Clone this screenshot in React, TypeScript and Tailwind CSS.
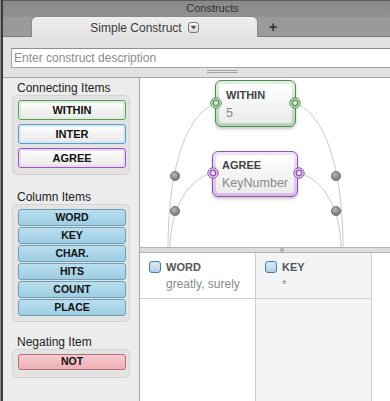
import React from "react";

const connecting = [
  { label: "WITHIN", border: "border-[#5b9a5b]", tint: "shadow-[inset_0_0_0_2px_#dbeedb]" },
  { label: "INTER", border: "border-[#5b9bc9]", tint: "shadow-[inset_0_0_0_2px_#d5e8f5]" },
  { label: "AGREE", border: "border-[#9a55c0]", tint: "shadow-[inset_0_0_0_2px_#ead9f3]" },
];

const columns = ["WORD", "KEY", "CHAR.", "HITS", "COUNT", "PLACE"];

function Port({ x, y, fill, stroke }: { x: number; y: number; fill: string; stroke: string }) {
  return (
    <g>
      <circle cx={x} cy={y} r={5.2} fill={fill} stroke={stroke} strokeWidth={1} />
      <circle cx={x} cy={y} r={2.8} fill="none" stroke={stroke} strokeWidth={1.3} />
    </g>
  );
}

function Dot({ x, y }: { x: number; y: number }) {
  return <circle cx={x} cy={y} r={4.6} fill="url(#dotg)" stroke="#6a6a6a" strokeWidth={0.8} />;
}

function Checkbox() {
  return (
    <div className="w-[12px] h-[12px] rounded-[3px] border border-[#3b7fae] bg-gradient-to-b from-[#dbeaf3] to-[#b3d1e3] shrink-0" />
  );
}

export default function App() {
  const m = (x: number) => 511 - x;
  return (
    <div className="w-[390px] h-[401px] flex overflow-hidden bg-[#e2e2e2] font-['Liberation_Sans',Arial,sans-serif]">
      <div className="w-[3px] shrink-0 flex">
        <div className="w-px bg-[#8c8c8c]" />
        <div className="w-[2px] bg-[#3c3c3c]" />
      </div>
      <div className="flex-1 min-w-0 flex flex-col">
        {/* title bar */}
        <div className="h-[17px] shrink-0 bg-gradient-to-b from-[#8a8a8a] to-[#929292] border-t border-[#5c5c5c] flex justify-center pl-[32px]">
          <span className="text-[11px] leading-[15px] text-[#333]">Constructs</span>
        </div>
        {/* tab strip */}
        <div className="h-[20px] shrink-0 bg-[#9a9a9a] flex items-end shadow-[inset_0_-1px_0_#7c7c7c]">
          <div className="ml-[29px] w-[225px] h-[20px] rounded-t-[5px] bg-gradient-to-b from-[#eeeeee] to-[#e3e3e3] shadow-[0_0_0_1px_#8a8a8a] flex items-center justify-center gap-[6px]">
            <span className="text-[12px] leading-[14px] text-[#3a3a3a] pt-[1px]">Simple Construct</span>
            <div className="w-[11px] h-[11px] rounded-[3px] border border-[#7a7a7a] bg-gradient-to-b from-[#fafafa] to-[#d8d8d8] flex items-center justify-center">
              <svg width="7" height="5" viewBox="0 0 7 5">
                <path d="M0.5 0.8 L6.5 0.8 L3.5 4.4 Z" fill="#555" />
              </svg>
            </div>
          </div>
          <div className="w-[32px] h-[20px] flex items-center justify-center">
            <span className="text-[14px] leading-[14px] font-bold text-[#333]">+</span>
          </div>
        </div>
        {/* description */}
        <div className="h-[40px] shrink-0 pt-[11px] pl-[8px] bg-[#e2e2e2]">
          <div className="h-[20px] bg-white border border-r-0 border-[#a4a4a4] border-t-[#8e8e8e] pl-[2px] text-[12px] leading-[18px] text-[#8c8c8c]">
            Enter construct description
          </div>
          <div className="ml-[196px] mt-[2px] w-[31px] flex flex-col gap-px">
            <div className="h-px bg-[#a6a6a6]" />
            <div className="h-px bg-[#a6a6a6]" />
          </div>
        </div>
        {/* main */}
        <div className="flex-1 min-h-0 flex border-t border-[#a8a8a8]">
          {/* left panel */}
          <div className="w-[137px] shrink-0 bg-[#ececec] border-r border-[#a6a6a6] pt-[3px] pl-[9px]">
            <div className="pl-[5px] h-[14px] text-[12px] leading-[14px] text-[#222]">Connecting Items</div>
            <div className="w-[118px] rounded-[5px] border border-[#d3d3d3] bg-[#e3e3e3] pt-[4px] pb-[6px] pl-[5px] pr-[3px] flex flex-col gap-[4px]">
              {connecting.map((c) => (
                <div
                  key={c.label}
                  className={`h-[20px] rounded-[3px] border ${c.border} ${c.tint} bg-gradient-to-b from-white to-[#e8e8e8] flex items-center justify-center text-[11px] font-bold text-[#111]`}
                >
                  {c.label}
                </div>
              ))}
            </div>
            <div className="mt-[15px] pl-[5px] h-[14px] text-[12px] leading-[14px] text-[#222]">Column Items</div>
            <div className="w-[118px] rounded-[5px] border border-[#d3d3d3] bg-[#e3e3e3] pt-[4px] pb-[5px] pl-[5px] pr-[3px] flex flex-col gap-px">
              {columns.map((c) => (
                <div
                  key={c}
                  className="h-[17px] rounded-[3px] border border-[#6f9db3] bg-gradient-to-b from-[#b9def0] to-[#9ecde2] flex items-center justify-center text-[10.5px] font-bold text-[#111]"
                >
                  {c}
                </div>
              ))}
            </div>
            <div className="mt-[13px] pl-[5px] h-[14px] text-[12px] leading-[14px] text-[#222]">Negating Item</div>
            <div className="w-[118px] rounded-[5px] border border-[#d3d3d3] bg-[#e3e3e3] pt-[4px] pb-[7px] pl-[5px] pr-[3px]">
              <div className="h-[16px] rounded-[3px] border border-[#b36f77] bg-gradient-to-b from-[#f6c8cc] to-[#eeb1b6] flex items-center justify-center text-[10.5px] font-bold text-[#111]">
                NOT
              </div>
            </div>
          </div>
          {/* right */}
          <div className="flex-1 min-w-0 flex flex-col">
            <div className="h-[169px] shrink-0 relative bg-white overflow-hidden">
              <svg className="absolute inset-0" width="250" height="169" viewBox="140 78 250 169">
                <defs>
                  <radialGradient id="dotg" cx="40%" cy="35%" r="70%">
                    <stop offset="0%" stopColor="#b8b8b8" />
                    <stop offset="100%" stopColor="#6e6e6e" />
                  </radialGradient>
                </defs>
                <g fill="none" stroke="#cacaca" strokeWidth={1}>
                  <path d="M216 103 C185 115 168 170 168 250" />
                  <path d={`M${m(216)} 103 C${m(185)} 115 ${m(168)} 170 ${m(168)} 250`} />
                  <path d="M213 173 C190 178 170 205 170 250" />
                  <path d={`M${m(213)} 173 C${m(190)} 178 ${m(170)} 205 ${m(170)} 250`} />
                </g>
                <Dot x={175} y={176} />
                <Dot x={175} y={211} />
                <Dot x={336} y={176} />
                <Dot x={336} y={211} />
              </svg>
              {/* WITHIN node */}
              <div className="absolute left-[75px] top-[2px] w-[81px] h-[47px] rounded-[6px] border border-[#4f8d4f] bg-gradient-to-b from-[#e4f1e4] to-[#b5d4b5] p-[3px] shadow-[0_2px_3px_rgba(0,0,0,0.22)]">
                <div className="h-full rounded-[3px] bg-gradient-to-b from-white to-[#ebebeb] pl-[7px] pt-[5px]">
                  <div className="text-[11px] leading-[13px] font-bold text-[#444]">WITHIN</div>
                  <div className="mt-[4px] text-[12.5px] leading-[14px] text-[#8a8a8a]">5</div>
                </div>
              </div>
              {/* AGREE node */}
              <div className="absolute left-[72px] top-[73px] w-[86px] h-[46px] rounded-[6px] border border-[#9150b6] bg-gradient-to-b from-[#f1e4f7] to-[#d7bbe6] p-[3px] shadow-[0_2px_3px_rgba(0,0,0,0.22)]">
                <div className="h-full rounded-[3px] bg-gradient-to-b from-white to-[#ebebeb] pl-[6px] pt-[4px]">
                  <div className="text-[11px] leading-[13px] font-bold text-[#444]">AGREE</div>
                  <div className="mt-[4px] text-[12.5px] leading-[14px] text-[#8a8a8a]">KeyNumber</div>
                </div>
              </div>
              <svg className="absolute inset-0 pointer-events-none" width="250" height="169" viewBox="140 78 250 169">
                <Port x={216} y={103} fill="#d6ebd6" stroke="#4f8d4f" />
                <Port x={295} y={103} fill="#d6ebd6" stroke="#4f8d4f" />
                <Port x={213} y={173} fill="#eddbf5" stroke="#9150b6" />
                <Port x={299} y={173} fill="#eddbf5" stroke="#9150b6" />
              </svg>
            </div>
            {/* divider */}
            <div className="h-[6px] shrink-0 border-y border-[#b4b4b4] bg-[#dddddd] relative">
              <div className="absolute left-[140px] top-0 w-[4px] h-[4px] rounded-full border border-[#9a9a9a] bg-[#d0d0d0]" />
            </div>
            {/* bottom */}
            <div className="flex-1 min-h-0 flex bg-white">
              <div className="w-[116px] shrink-0 bg-white border-r border-[#cfcfcf]">
                <div className="h-[46px] border-b border-[#cfcfcf] pt-[8px] pl-[9px]">
                  <div className="flex items-center gap-[5px]">
                    <Checkbox />
                    <span className="text-[11px] leading-[12px] font-bold text-[#555]">WORD</span>
                  </div>
                  <div className="mt-[4px] pl-[17px] text-[12px] leading-[14px] text-[#8a8a8a]">greatly, surely</div>
                </div>
              </div>
              <div className="w-[116px] shrink-0 bg-[#f4f4f4] border-r border-[#cfcfcf]">
                <div className="h-[46px] border-b border-[#cfcfcf] pt-[8px] pl-[9px]">
                  <div className="flex items-center gap-[5px]">
                    <Checkbox />
                    <span className="text-[11px] leading-[12px] font-bold text-[#555]">KEY</span>
                  </div>
                  <div className="mt-[4px] pl-[17px] text-[11px] leading-[14px] text-[#8a8a8a]">*</div>
                </div>
              </div>
              <div className="flex-1" />
            </div>
          </div>
        </div>
      </div>
    </div>
  );
}
